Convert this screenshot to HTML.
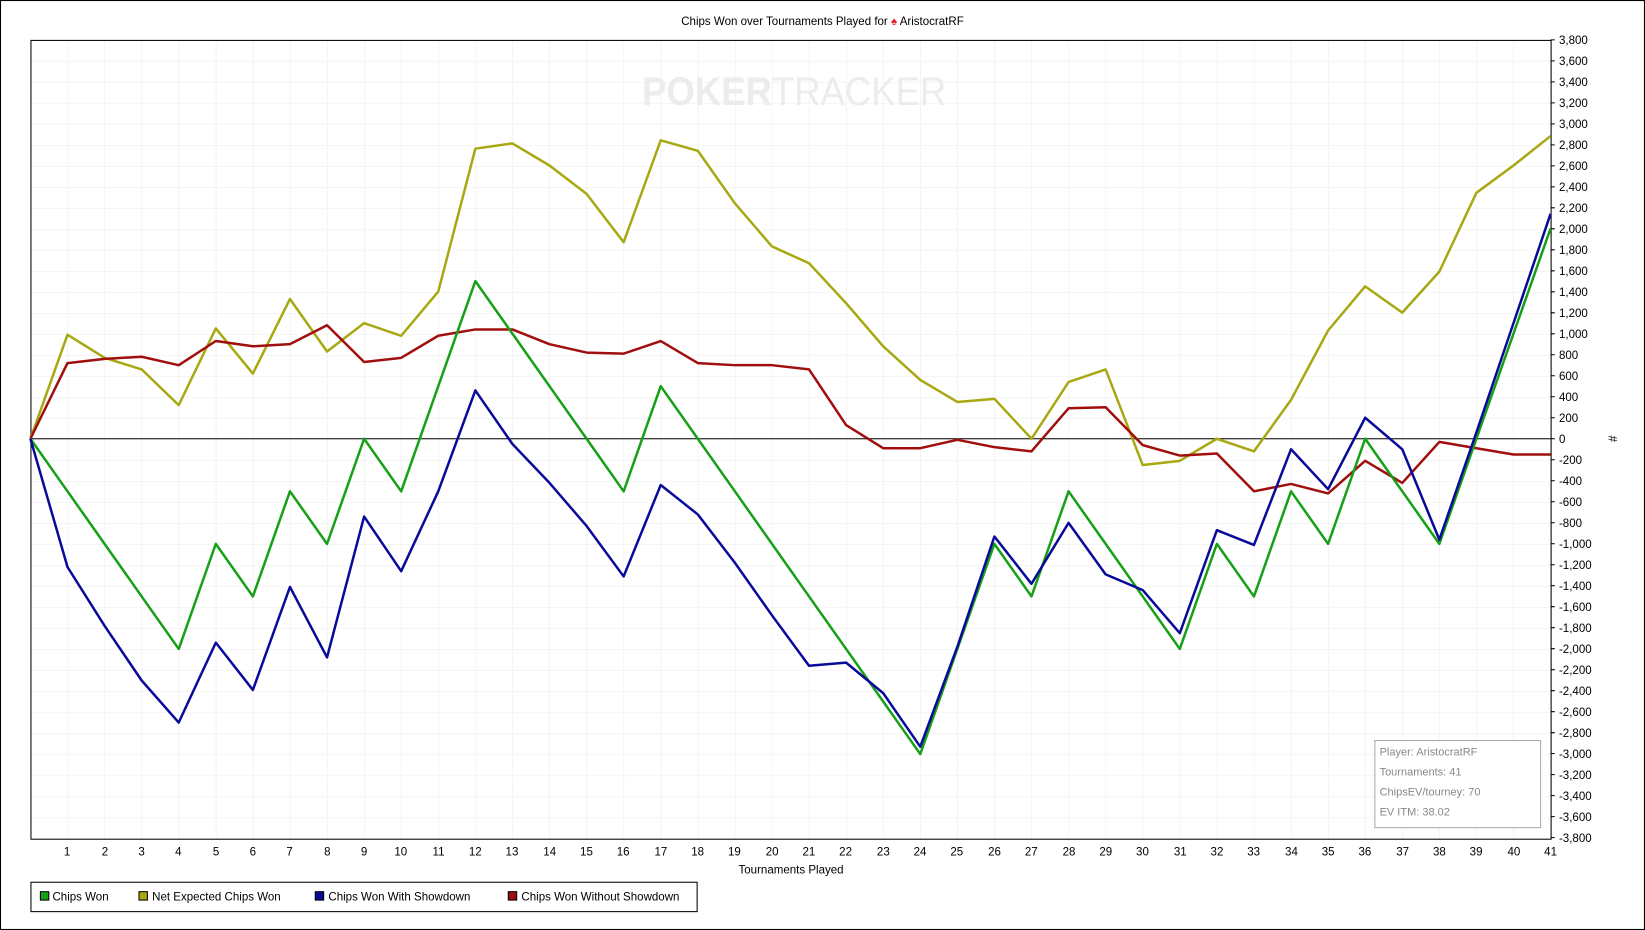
<!DOCTYPE html>
<html><head><meta charset="utf-8"><style>
html,body{margin:0;padding:0;background:#fff;}
body{width:1645px;height:930px;overflow:hidden;}
svg{display:block;font-family:"Liberation Sans",sans-serif;}
</style></head><body>
<svg width="1645" height="930" viewBox="0 0 1568 886" preserveAspectRatio="none">
<defs>
<pattern id="g" x="29" y="38" width="35.341" height="20.026" patternUnits="userSpaceOnUse">
<path d="M0 0H35.341M0 0V20.026" stroke="#ebebeb" stroke-width="1" fill="none"/>
</pattern>
</defs>
<rect x="0.5" y="0.5" width="1567" height="885" fill="#fff" stroke="#000"/>
<text x="784" y="24" font-size="11" text-anchor="middle" fill="#000">Chips Won over Tournaments Played for <tspan fill="#d22">♠</tspan> AristocratRF</text>
<rect x="29" y="38" width="1449" height="761" fill="url(#g)"/>
<text x="757" y="100" font-size="38" font-weight="bold" text-anchor="middle" fill="#ececec" textLength="290" lengthAdjust="spacingAndGlyphs">POKER<tspan font-weight="normal">TRACKER</tspan></text>
<line x1="29" y1="418" x2="1478" y2="418" stroke="#000" stroke-width="1"/>
<rect x="29.5" y="38.5" width="1449" height="761" fill="none" stroke="#000"/>
<g transform="translate(29,418) scale(35.341,-0.10013)" fill="none" stroke-width="2.5" stroke-linejoin="round">
<polyline vector-effect="non-scaling-stroke" stroke="#a8a812" points="0,0 1,990 2,770 3,660 4,320 5,1050 6,620 7,1330 8,830 9,1100 10,980 11,1400 12,2760 13,2810 14,2600 15,2330 16,1870 17,2840 18,2740 19,2240 20,1830 21,1670 22,1290 23,880 24,560 25,350 26,380 27,0 28,540 29,660 30,-250 31,-210 32,0 33,-120 34,370 35,1030 36,1450 37,1200 38,1590 39,2340 40,2600 41,2880"/>
<polyline vector-effect="non-scaling-stroke" stroke="#a00e0e" points="0,0 1,720 2,760 3,780 4,700 5,930 6,880 7,900 8,1080 9,730 10,770 11,980 12,1040 13,1040 14,900 15,820 16,810 17,930 18,720 19,700 20,700 21,660 22,130 23,-90 24,-90 25,-10 26,-80 27,-120 28,290 29,300 30,-60 31,-160 32,-140 33,-500 34,-430 35,-520 36,-210 37,-420 38,-30 39,-90 40,-150 41,-150"/>
<polyline vector-effect="non-scaling-stroke" stroke="#16a016" points="0,0 1,-500 2,-1000 3,-1500 4,-2000 5,-1000 6,-1500 7,-500 8,-1000 9,0 10,-500 11,500 12,1500 13,1000 14,500 15,0 16,-500 17,500 18,0 19,-500 20,-1000 21,-1500 22,-2000 23,-2500 24,-3000 25,-2000 26,-1000 27,-1500 28,-500 29,-1000 30,-1500 31,-2000 32,-1000 33,-1500 34,-500 35,-1000 36,0 37,-500 38,-1000 39,0 40,1000 41,2000"/>
<polyline vector-effect="non-scaling-stroke" stroke="#0a0a9a" points="0,0 1,-1220 2,-1780 3,-2300 4,-2700 5,-1940 6,-2390 7,-1410 8,-2080 9,-740 10,-1260 11,-500 12,460 13,-50 14,-420 15,-830 16,-1310 17,-440 18,-720 19,-1180 20,-1680 21,-2160 22,-2130 23,-2420 24,-2930 25,-1980 26,-930 27,-1380 28,-800 29,-1290 30,-1440 31,-1850 32,-870 33,-1010 34,-100 35,-480 36,200 37,-100 38,-960 39,60 40,1100 41,2140"/>
</g>
<g stroke="#000">
<path d="M1478 38h4M1478 58h4M1478 78h4M1478 98h4M1478 118h4M1478 138h4M1478 158h4M1478 178h4M1478 198h4M1478 218h4M1478 238h4M1478 258h4M1478 278h4M1478 298h4M1478 318h4M1478 338h4M1478 358h4M1478 378h4M1478 398h4M1478 418h4M1478 438h4M1478 458h4M1478 478h4M1478 498h4M1478 518h4M1478 538h4M1478 558h4M1478 578h4M1478 598h4M1478 618h4M1478 638h4M1478 658h4M1478 678h4M1478 698h4M1478 718h4M1478 738h4M1478 758h4M1478 778h4M1478 798h4"/>
</g>
<g font-size="11" fill="#000">
<text x="1486" y="42">3,800</text><text x="1486" y="62">3,600</text><text x="1486" y="82">3,400</text><text x="1486" y="102">3,200</text><text x="1486" y="122">3,000</text><text x="1486" y="142">2,800</text><text x="1486" y="162">2,600</text><text x="1486" y="182">2,400</text><text x="1486" y="202">2,200</text><text x="1486" y="222">2,000</text><text x="1486" y="242">1,800</text><text x="1486" y="262">1,600</text><text x="1486" y="282">1,400</text><text x="1486" y="302">1,200</text><text x="1486" y="322">1,000</text><text x="1486" y="342">800</text><text x="1486" y="362">600</text><text x="1486" y="382">400</text><text x="1486" y="402">200</text><text x="1486" y="422">0</text><text x="1486" y="442">-200</text><text x="1486" y="462">-400</text><text x="1486" y="482">-600</text><text x="1486" y="502">-800</text><text x="1486" y="522">-1,000</text><text x="1486" y="542">-1,200</text><text x="1486" y="562">-1,400</text><text x="1486" y="582">-1,600</text><text x="1486" y="602">-1,800</text><text x="1486" y="622">-2,000</text><text x="1486" y="642">-2,200</text><text x="1486" y="662">-2,400</text><text x="1486" y="682">-2,600</text><text x="1486" y="702">-2,800</text><text x="1486" y="722">-3,000</text><text x="1486" y="742">-3,200</text><text x="1486" y="762">-3,400</text><text x="1486" y="782">-3,600</text><text x="1486" y="802">-3,800</text>
<text x="1533" y="418" transform="rotate(90 1533 418)" text-anchor="middle">#</text>
</g>
<g font-size="11" fill="#000" text-anchor="middle">
<text x="64" y="815">1</text><text x="100" y="815">2</text><text x="135" y="815">3</text><text x="170" y="815">4</text><text x="206" y="815">5</text><text x="241" y="815">6</text><text x="276" y="815">7</text><text x="312" y="815">8</text><text x="347" y="815">9</text><text x="382" y="815">10</text><text x="418" y="815">11</text><text x="453" y="815">12</text><text x="488" y="815">13</text><text x="524" y="815">14</text><text x="559" y="815">15</text><text x="594" y="815">16</text><text x="630" y="815">17</text><text x="665" y="815">18</text><text x="700" y="815">19</text><text x="736" y="815">20</text><text x="771" y="815">21</text><text x="806" y="815">22</text><text x="842" y="815">23</text><text x="877" y="815">24</text><text x="912" y="815">25</text><text x="948" y="815">26</text><text x="983" y="815">27</text><text x="1019" y="815">28</text><text x="1054" y="815">29</text><text x="1089" y="815">30</text><text x="1125" y="815">31</text><text x="1160" y="815">32</text><text x="1195" y="815">33</text><text x="1231" y="815">34</text><text x="1266" y="815">35</text><text x="1301" y="815">36</text><text x="1337" y="815">37</text><text x="1372" y="815">38</text><text x="1407" y="815">39</text><text x="1443" y="815">40</text><text x="1478" y="815">41</text>
<text x="754" y="832">Tournaments Played</text>
</g>
<rect x="1310.5" y="705.5" width="158" height="83" fill="#fff" stroke="#aaa"/>
<g font-size="10.5" fill="#888">
<text x="1315" y="720">Player: AristocratRF</text>
<text x="1315" y="739">Tournaments: 41</text>
<text x="1315" y="758">ChipsEV/tourney: 70</text>
<text x="1315" y="777">EV ITM: 38.02</text>
</g>
<rect x="29.5" y="840.5" width="635" height="28" fill="#fff" stroke="#000"/>
<g font-size="11" fill="#000">
<rect x="38.5" y="849.5" width="8" height="8" fill="#16a016" stroke="#000"/><text x="50" y="858">Chips Won</text>
<rect x="132.5" y="849.5" width="8" height="8" fill="#a8a812" stroke="#000"/><text x="145" y="858">Net Expected Chips Won</text>
<rect x="300.5" y="849.5" width="8" height="8" fill="#0a0a9a" stroke="#000"/><text x="313" y="858">Chips Won With Showdown</text>
<rect x="484.5" y="849.5" width="8" height="8" fill="#a00e0e" stroke="#000"/><text x="497" y="858">Chips Won Without Showdown</text>
</g>
</svg>
</body></html>
